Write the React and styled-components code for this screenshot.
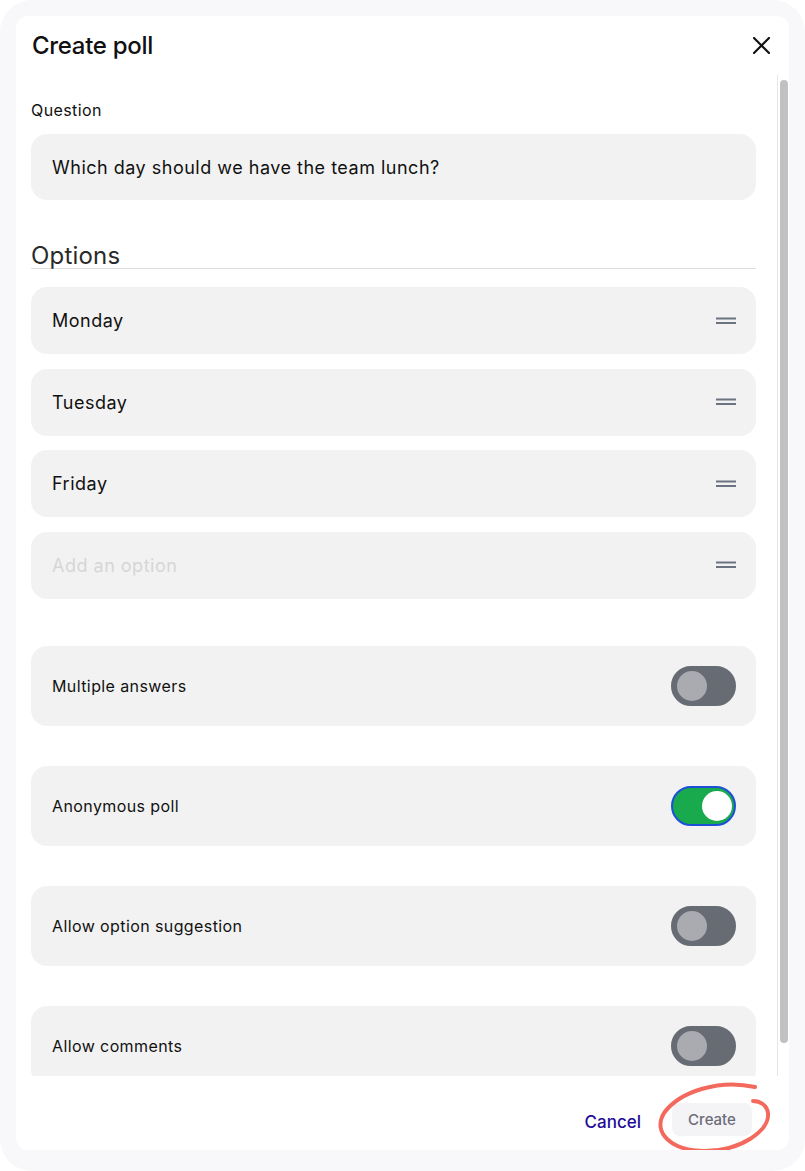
import React from "react";
import styled, { createGlobalStyle } from "styled-components";

const GlobalStyle = createGlobalStyle`
  * { box-sizing: border-box; }
  body {
    margin: 0;
    background: #ffffff;
    font-family: "Inter", "Noto Sans", "Liberation Sans", sans-serif;
    color: #111111;
  }
`;

const Page = styled.div`
  height: 1171px;
  padding: 16px 16px 21px;
  background: #f8f8fa;
  border-radius: 32px;
`;

const Card = styled.div`
  height: 100%;
  background: #ffffff;
  border-radius: 12px;
  display: flex;
  flex-direction: column;
  overflow: hidden;
`;

const Header = styled.header`
  height: 59px;
  flex-shrink: 0;
  display: flex;
  align-items: center;
  justify-content: space-between;
  padding: 0 18px 0 16px;
  .modal-title {
    margin: 0;
    font-size: 24px;
    font-weight: 500;
    letter-spacing: -0.3px;
    color: #111111;
  }
`;

const CloseButton = styled.button`
  border: 0;
  background: none;
  padding: 0;
  width: 20px;
  height: 20px;
  display: flex;
  align-items: center;
  justify-content: center;
  cursor: pointer;
  color: #111111;
`;

const Body = styled.div`
  flex: 1;
  min-height: 0;
  display: flex;
`;

const ScrollArea = styled.div`
  flex: 1;
  overflow-y: auto;
  scrollbar-width: none;
  padding: 25px 21px 19px 15px;
  &::-webkit-scrollbar {
    display: none;
  }
`;

const ScrollTrack = styled.div`
  width: 12px;
  flex-shrink: 0;
  border-left: 1px solid #e6e6e6;
  padding: 5px 1px 0 2px;
`;

const ScrollThumb = styled.div`
  width: 8px;
  border-radius: 4px;
  background: #c1c1c1;
`;

const FieldLabel = styled.label`
  display: block;
  font-size: 16px;
  line-height: 20px;
  letter-spacing: 0.4px;
  color: #111111;
  margin-bottom: 14px;
`;

const TextField = styled.input`
  display: block;
  width: 100%;
  height: 66px;
  border: 0;
  outline: none;
  border-radius: 16px;
  background: #f2f2f2;
  padding: 0 21px;
  font-family: inherit;
  font-size: 18px;
  letter-spacing: 0.5px;
  color: #111111;
  &::placeholder {
    color: #d6d6d6;
  }
`;

const SectionTitle = styled.h2`
  margin: 40px 0 18px;
  font-size: 24px;
  font-weight: 400;
  line-height: 31px;
  letter-spacing: 0.2px;
  color: #2a2a2a;
  border-bottom: 1px solid #dedede;
  height: 29px;
`;

const OptionList = styled.div`
  display: flex;
  flex-direction: column;
  gap: 14.5px;
`;

const OptionRow = styled.div`
  position: relative;
  display: flex;
  align-items: center;
  ${TextField} {
    height: 67px;
    padding-right: 60px;
  }
`;

const DragHandle = styled.span`
  position: absolute;
  right: 20px;
  top: 50%;
  transform: translateY(-50%);
  display: flex;
  cursor: grab;
`;

const SettingsList = styled.div`
  margin-top: 47px;
  display: flex;
  flex-direction: column;
  gap: 40px;
`;

const SettingRow = styled.div`
  height: 80px;
  border-radius: 16px;
  background: #f2f2f2;
  display: flex;
  align-items: center;
  justify-content: space-between;
  padding: 0 20px 0 21px;
  font-size: 16px;
  letter-spacing: 0.4px;
  color: #111111;
`;

const Switch = styled.button`
  position: relative;
  width: 65px;
  height: 40px;
  border-radius: 20px;
  padding: 0;
  cursor: pointer;
  border: 2px solid ${(p) => (p.$on ? "#1d4fd8" : "#676b73")};
  background: ${(p) => (p.$on ? "#1aaa4e" : "#676b73")};
  &::after {
    content: "";
    position: absolute;
    top: 3px;
    left: ${(p) => (p.$on ? "29px" : "4px")};
    width: 30px;
    height: 30px;
    border-radius: 50%;
    background: ${(p) => (p.$on ? "#ffffff" : "#a9abb0")};
  }
`;

const Footer = styled.footer`
  height: 74px;
  flex-shrink: 0;
  display: flex;
  align-items: center;
  justify-content: flex-end;
  gap: 31px;
  padding: 12px 37px 0 0;
`;

const TextButton = styled.button`
  border: 0;
  background: none;
  padding: 0;
  font-family: inherit;
  font-size: 17px;
  font-weight: 500;
  color: #1e0b98;
  cursor: pointer;
  margin-top: 5px;
`;

const PrimaryWrap = styled.div`
  position: relative;
`;

const PrimaryButton = styled.button`
  width: 80px;
  height: 33px;
  border: 0;
  border-radius: 8px;
  background: #f4f4f7;
  font-family: inherit;
  font-size: 15px;
  font-weight: 500;
  color: #6b6b78;
  cursor: not-allowed;
`;

const Scribble = styled.svg`
  position: absolute;
  left: -16px;
  top: -22px;
  width: 114px;
  height: 72px;
  overflow: visible;
  pointer-events: none;
`;

const options = ["Monday", "Tuesday", "Friday"];

const settings = [
  { label: "Multiple answers", on: false },
  { label: "Anonymous poll", on: true },
  { label: "Allow option suggestion", on: false },
  { label: "Allow comments", on: false },
];

const HandleIcon = () => (
  <svg width="20" height="8" viewBox="0 0 20 8">
    <rect x="0" y="0.5" width="20" height="2" fill="#6b7280" />
    <rect x="0" y="5" width="20" height="2" fill="#6b7280" />
  </svg>
);

const CreatePoll = () => {
  return (
    <Page>
      <Card>
        <Header>
          <h1 className="modal-title">Create poll</h1>
          <CloseButton aria-label="Close">
            <svg width="17" height="17" viewBox="0 0 17 17">
              <path
                d="M1 1 16 16M16 1 1 16"
                stroke="currentColor"
                strokeWidth="2.2"
                strokeLinecap="round"
              />
            </svg>
          </CloseButton>
        </Header>

        <Body>
          <ScrollArea>
            <FieldLabel htmlFor="question">Question</FieldLabel>
            <TextField
              id="question"
              defaultValue="Which day should we have the team lunch?"
            />

            <SectionTitle>Options</SectionTitle>
            <OptionList>
              {options.map((o) => (
                <OptionRow key={o}>
                  <TextField defaultValue={o} />
                  <DragHandle>
                    <HandleIcon />
                  </DragHandle>
                </OptionRow>
              ))}
              <OptionRow>
                <TextField placeholder="Add an option" />
                <DragHandle>
                  <HandleIcon />
                </DragHandle>
              </OptionRow>
            </OptionList>

            <SettingsList>
              {settings.map((s) => (
                <SettingRow key={s.label}>
                  <span>{s.label}</span>
                  <Switch role="switch" aria-checked={s.on} $on={s.on} />
                </SettingRow>
              ))}
            </SettingsList>
          </ScrollArea>
          <ScrollTrack>
            <ScrollThumb style={{ height: 963 }} />
          </ScrollTrack>
        </Body>

        <Footer>
          <TextButton>Cancel</TextButton>
          <PrimaryWrap>
            <PrimaryButton>Create</PrimaryButton>
            <Scribble>
              <path
                d="M99 6 C64 -2 24 10 8 32 C-4 52 16 70 49 70 C84 70 114 50 112 32 C111 24 104 20 97 20"
                fill="none"
                stroke="#f4695d"
                strokeWidth="4"
                strokeLinecap="round"
              />
            </Scribble>
          </PrimaryWrap>
        </Footer>
      </Card>
    </Page>
  );
};

export default function App() {
  return (
    <>
      <GlobalStyle />
      <CreatePoll />
    </>
  );
}
